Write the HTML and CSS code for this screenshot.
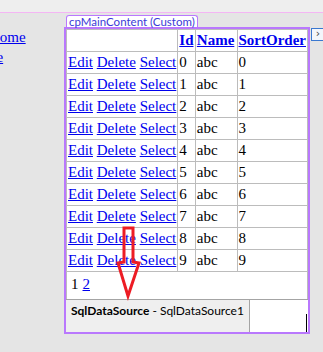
FILE: index.html
```html
<!DOCTYPE html>
<html>
<head>
    <meta charset="UTF-8">
    <title>GridView - Design</title>
    <link rel="stylesheet" href="styles.css">
</head>
<body>
<div class="topbar"></div>
<div class="workspace">
    <div class="side">
        <a href="#" class="side-home">Home</a>
        <a href="#" class="side-page">Page</a>
    </div>
    <div class="designer">
        <div class="tab">cpMainContent (Custom)</div>
        <div class="content">
            <table class="grid">
                <tr>
                    <th class="col-cmd"></th>
                    <th class="col-id"><a href="#">Id</a></th>
                    <th class="col-name"><a href="#">Name</a></th>
                    <th><a href="#">SortOrder</a></th>
                </tr>
                <tr><td><a href="#">Edit</a> <a href="#">Delete</a> <a href="#">Select</a></td><td>0</td><td>abc</td><td>0</td></tr>
                <tr><td><a href="#">Edit</a> <a href="#">Delete</a> <a href="#">Select</a></td><td>1</td><td>abc</td><td>1</td></tr>
                <tr><td><a href="#">Edit</a> <a href="#">Delete</a> <a href="#">Select</a></td><td>2</td><td>abc</td><td>2</td></tr>
                <tr><td><a href="#">Edit</a> <a href="#">Delete</a> <a href="#">Select</a></td><td>3</td><td>abc</td><td>3</td></tr>
                <tr><td><a href="#">Edit</a> <a href="#">Delete</a> <a href="#">Select</a></td><td>4</td><td>abc</td><td>4</td></tr>
                <tr><td><a href="#">Edit</a> <a href="#">Delete</a> <a href="#">Select</a></td><td>5</td><td>abc</td><td>5</td></tr>
                <tr><td><a href="#">Edit</a> <a href="#">Delete</a> <a href="#">Select</a></td><td>6</td><td>abc</td><td>6</td></tr>
                <tr><td><a href="#">Edit</a> <a href="#">Delete</a> <a href="#">Select</a></td><td>7</td><td>abc</td><td>7</td></tr>
                <tr><td><a href="#">Edit</a> <a href="#">Delete</a> <a href="#">Select</a></td><td>8</td><td>abc</td><td>8</td></tr>
                <tr><td><a href="#">Edit</a> <a href="#">Delete</a> <a href="#">Select</a></td><td>9</td><td>abc</td><td>9</td></tr>
                <tr>
                    <td colspan="4" class="pager"><span>1</span><a href="#">2</a></td>
                </tr>
            </table>
            <div class="ds-row">
                <div class="ds"><b>SqlDataSource</b> - SqlDataSource1</div>
                <div class="ds-rest"><span class="caret"></span></div>
            </div>
        </div>
    </div>
    <div class="expander">›</div>
</div>

<!--提示箭头-->
<svg class="arrow" width="40" height="80" viewBox="112 222 40 80">
    <polygon points="124,228 133,228 133,262 139,263 128,296 118,263 124,262"
             fill="none" stroke="#ed1c24" stroke-width="3" stroke-linejoin="miter"/>
</svg>
</body>
</html>
```

FILE: styles.css
```css
* {
    margin: 0;
    padding: 0;
}

html, body {
    width: 100%;
    height: 100%;
    overflow: hidden;
}

body {
    background: #e5e5e5;
    font-family: "Liberation Serif", "Times New Roman", serif;
    font-size: 15px;
    color: #000;
}

a {
    color: #0000ee;
}

.topbar {
    height: 12px;
    background: #eeeeee;
    border-bottom: 1px solid #f4b6f4;
}

.workspace {
    display: flex;
    align-items: flex-start;
}

.side {
    width: 64px;
    flex: none;
    padding-top: 14px;
    line-height: 20px;
}

.side a {
    display: block;
    white-space: nowrap;
}

.side-home {
    margin-left: -11px;
}

.side-page {
    margin-left: -26px;
}

.designer {
    flex: none;
    margin-top: 2px;
}

.tab {
    width: max-content;
    margin-left: 2px;
    padding: 0 2px;
    height: 11px;
    line-height: 12px;
    border: 1px solid #b978fd;
    border-bottom: 0;
    border-radius: 3px 3px 0 0;
    background: #fff;
    font-family: Lato, "Liberation Sans", sans-serif;
    font-size: 11.5px;
    color: #3a3ad8;
    white-space: nowrap;
}

.content {
    width: 242px;
    border: 2px solid #b978fd;
    background: #fff;
}

.grid {
    width: 242px;
    border-collapse: collapse;
}

.grid th, .grid td {
    padding: 1px;
    border: 1px solid #bcbcbc;
    line-height: 19px;
    text-align: left;
    white-space: nowrap;
    font-size: 15px;
}

.grid th {
    font-weight: bold;
}

.col-cmd {
    width: 108px;
}

.col-id {
    width: 15px;
}

.col-name {
    width: 40px;
}

.grid .pager {
    padding: 3px 0 5px 4px;
    border-bottom-color: #a4a4a4;
}

.pager a {
    margin-left: 4px;
}

.ds-row {
    display: flex;
    height: 32px;
}

.ds {
    padding: 3px 5px 0;
    line-height: 16px;
    background: #efefef;
    border-right: 1px solid #a4a4a4;
    font-family: Lato, "Liberation Sans", sans-serif;
    font-size: 12px;
    color: #000;
    white-space: nowrap;
}

.ds-rest {
    flex: 1;
    display: flex;
    justify-content: flex-end;
    align-items: flex-end;
}

.caret {
    width: 1px;
    height: 18px;
    margin-right: 1px;
    background: #000;
}

.expander {
    flex: none;
    margin-top: 15px;
    margin-left: 1px;
    width: 12px;
    height: 11px;
    line-height: 10px;
    text-align: center;
    border: 1px solid #3a78d0;
    background: #f3f6fb;
    font-family: "DejaVu Sans", sans-serif;
    font-size: 11px;
    color: #444;
}

.arrow {
    position: absolute;
    left: 112px;
    top: 222px;
    pointer-events: none;
}
```
